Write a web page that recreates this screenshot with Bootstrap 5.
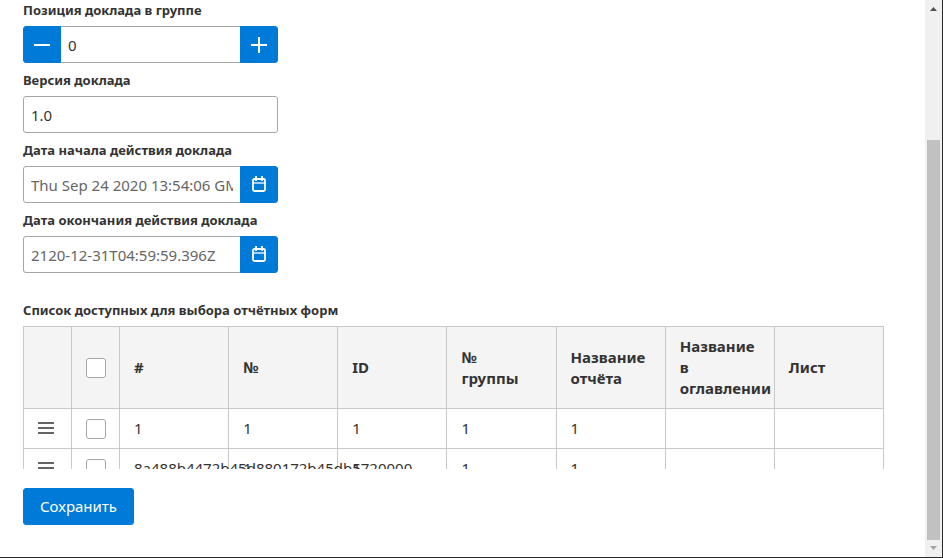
<!DOCTYPE html>
<html lang="ru">
<head>
<meta charset="utf-8">
<meta name="viewport" content="width=device-width, initial-scale=1">
<title>Доклад</title>
<link href="https://cdn.jsdelivr.net/npm/bootstrap@5.3.0/dist/css/bootstrap.min.css" rel="stylesheet">
<style>
body{font-family:"Noto Sans","Open Sans",sans-serif;font-size:15px;line-height:21px;color:#333}
.shell{border-right:1px solid #2a2a2c;border-bottom:1px solid #2a2a2c}
.pane{padding:0 41px 0 23px}
.field-stack{width:255px;gap:7px}
.field-label{font-size:13px;line-height:20px;font-weight:700;margin-bottom:6px}
.form-control{height:37px;padding:0 7px;border:1px solid #a6a6a6;border-radius:3px;color:#333;font-size:15px}
.date-text{color:#666}
.btn-brand{--bs-btn-bg:#007ad9;--bs-btn-border-color:#007ad9;--bs-btn-color:#fff;--bs-btn-hover-bg:#116fbf;--bs-btn-hover-color:#fff;--bs-btn-active-bg:#005b9f;--bs-btn-border-radius:3px;font-size:15px;height:37px}
.btn-side{width:38px}
.btn-side svg{display:block;margin:0 auto}
.list-block{margin-top:27px}
.grid-view{height:143px}
.forms-grid{table-layout:fixed;border-color:#c8c8c8;color:#333;--bs-table-color:#333}
.forms-grid th{background:#f4f4f4;height:82px;padding:9px 0 9px 14px;vertical-align:middle}
.forms-grid .txt{padding-right:20px}
.forms-grid td{height:40px;padding:9px 0 9px 14px}
.forms-grid .col-tool{width:48px}
.forms-grid .tick{display:block;width:20px;height:20px;margin:0;border:1px solid #a6a6a6;border-radius:3px}
.save-row{margin-top:19px}
.rail{width:17px;background:#f0f0f0;padding:7px 2px}
.rail-space{flex:129 0 0}
.thumb{background:#c1c1c1;flex:400 0 0;margin-bottom:6px}
</style>
<script src="https://cdn.jsdelivr.net/npm/bootstrap@5.3.0/dist/js/bootstrap.bundle.min.js"></script>
</head>
<body>
<div class="shell d-flex vh-100 overflow-hidden">
<main class="pane flex-grow-1">
<form>
<div class="field-stack d-flex flex-column">
<div><label class="field-label d-block" for="pos">Позиция доклада в группе</label>
<div class="input-group flex-nowrap">
<button type="button" class="btn btn-brand btn-side p-0" aria-label="Уменьшить"><svg width="18" height="18" viewBox="0 0 18 18" fill="none" stroke="#fff" stroke-width="2"><path d="M1 9h16"/></svg></button>
<input class="form-control" id="pos" type="text" value="0">
<button type="button" class="btn btn-brand btn-side p-0" aria-label="Увеличить"><svg width="18" height="18" viewBox="0 0 18 18" fill="none" stroke="#fff" stroke-width="2"><path d="M1 9h16M9 1v16"/></svg></button>
</div></div>
<div><label class="field-label d-block" for="ver">Версия доклада</label>
<input class="form-control" id="ver" type="text" value="1.0"></div>
<div><label class="field-label d-block" for="from">Дата начала действия доклада</label>
<div class="input-group flex-nowrap">
<input class="form-control date-text" id="from" type="text" value="Thu Sep 24 2020 13:54:06 GMT+0300">
<button type="button" class="btn btn-brand btn-side p-0" aria-label="Выбрать дату начала"><svg width="16" height="18" viewBox="0 0 16 18" fill="none" stroke="#fff" stroke-width="1.8"><rect x="2" y="3" width="12" height="12" rx="1.5"/><path d="M2 7h12" stroke-width="1.3"/><path d="M5 0v5M11 0v5"/></svg></button>
</div></div>
<div><label class="field-label d-block" for="to">Дата окончания действия доклада</label>
<div class="input-group flex-nowrap">
<input class="form-control date-text" id="to" type="text" value="2120-12-31T04:59:59.396Z">
<button type="button" class="btn btn-brand btn-side p-0" aria-label="Выбрать дату окончания"><svg width="16" height="18" viewBox="0 0 16 18" fill="none" stroke="#fff" stroke-width="1.8"><rect x="2" y="3" width="12" height="12" rx="1.5"/><path d="M2 7h12" stroke-width="1.3"/><path d="M5 0v5M11 0v5"/></svg></button>
</div></div>
</div>
<div class="list-block">
<div class="field-label" id="list-title">Список доступных для выбора отчётных форм</div>
<div class="grid-view overflow-hidden">
<table class="forms-grid table table-bordered align-middle mb-0" aria-labelledby="list-title">
<thead><tr><th class="col-tool"></th><th class="col-tool"><input class="form-check-input tick" type="checkbox" aria-label="Выбрать все"></th><th>#</th><th>№</th><th>ID</th><th class="txt">№ группы</th><th class="txt">Название отчёта</th><th class="txt">Название в оглавлении</th><th>Лист</th></tr></thead>
<tbody>
<tr><td><svg class="d-block" width="16" height="14" viewBox="0 0 16 14" stroke="#333" stroke-width="1.4"><path d="M0 1h16M0 6h16M0 11h16"/></svg></td><td><input class="form-check-input tick" type="checkbox" aria-label="Выбрать строку 1"></td><td>1</td><td>1</td><td>1</td><td>1</td><td>1</td><td></td><td></td></tr>
<tr><td><svg class="d-block" width="16" height="14" viewBox="0 0 16 14" stroke="#333" stroke-width="1.4"><path d="M0 1h16M0 6h16M0 11h16"/></svg></td><td><input class="form-check-input tick" type="checkbox" aria-label="Выбрать строку 2"></td><td>8a488b4472b45d880172b45db5720000</td><td>1</td><td>1</td><td>1</td><td>1</td><td></td><td></td></tr>
</tbody></table>
</div></div>
<div class="save-row"><button type="button" class="btn btn-brand px-3 py-0">Сохранить</button></div>
</form>
</main>
<div class="rail d-flex flex-column align-items-center flex-shrink-0" aria-hidden="true">
<svg width="7" height="4" viewBox="0 0 7 4" fill="#505050"><path d="M0 4L3.5 0L7 4z"/></svg>
<div class="rail-space"></div><div class="thumb w-100"></div>
<svg width="7" height="4" viewBox="0 0 7 4" fill="#a3a3a3"><path d="M0 0L3.5 4L7 0z"/></svg>
</div>
</div>
</body>
</html>
